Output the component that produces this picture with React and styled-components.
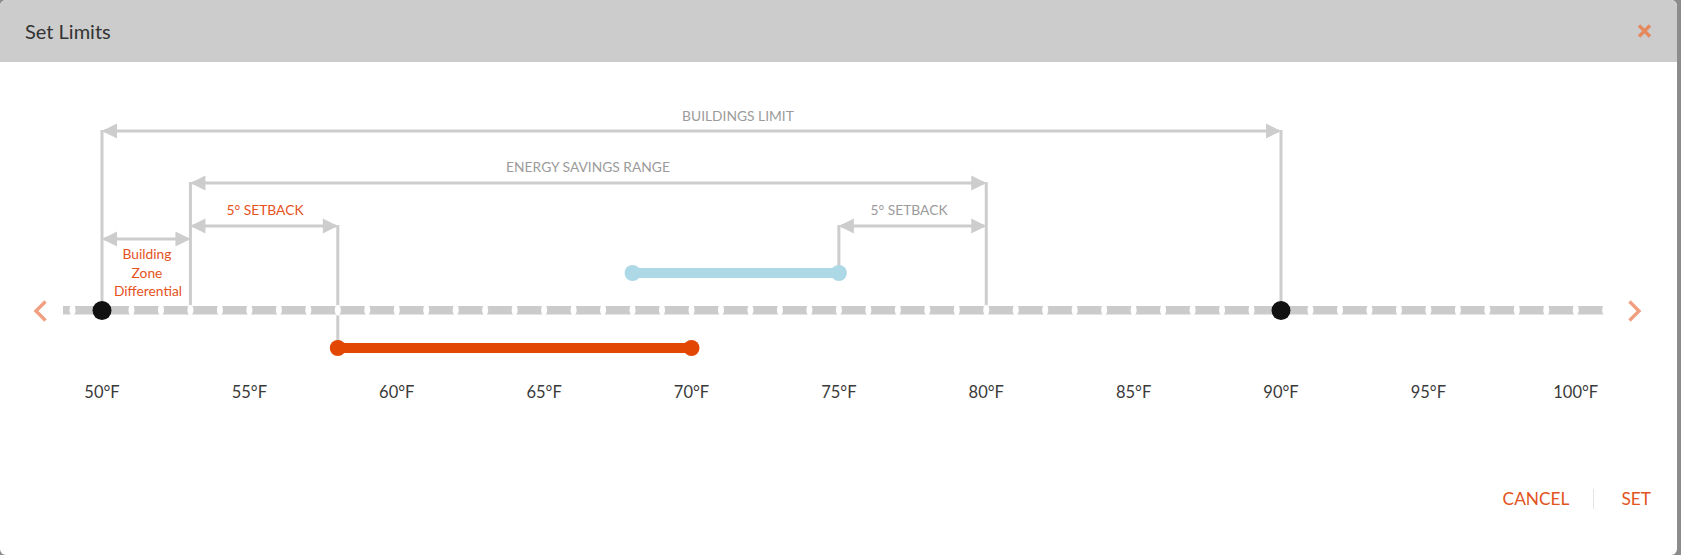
import React from "react";
import styled, { createGlobalStyle } from "styled-components";

const GlobalStyle = createGlobalStyle`
  html, body {
    margin: 0;
    padding: 0;
    background: #8c8c8c;
    font-family: Lato, "Open Sans", sans-serif;
  }
  * { box-sizing: border-box; }
`;

const Modal = styled.div`
  width: 1677px;
  height: 555px;
  background: #ffffff;
  border-radius: 6px;
  display: flex;
  flex-direction: column;
  overflow: hidden;
`;

const Header = styled.div`
  height: 62px;
  flex: 0 0 62px;
  background: #cccccc;
  display: flex;
  align-items: center;
  justify-content: space-between;
  padding: 0 25px 0 25px;
`;

const Title = styled.h2`
  margin: 0;
  font-family: Lato, sans-serif;
  font-weight: 400;
  font-size: 20px;
  color: #333333;
`;

const CloseButton = styled.button`
  border: 0;
  background: none;
  padding: 0;
  width: 15px;
  height: 14px;
  display: flex;
  cursor: pointer;
  color: #e5895f;
`;

const ChartRow = styled.div`
  height: 378px;
  flex: 0 0 378px;
  display: flex;
  align-items: flex-start;
`;

const NavButton = styled.button`
  border: 0;
  background: none;
  height: 22px;
  margin-top: 238px;
  flex: 0 0 ${(p) => p.$w}px;
  width: ${(p) => p.$w}px;
  padding: 0 0 0 ${(p) => p.$pad}px;
  display: flex;
  align-items: center;
  color: #f0a080;
  cursor: pointer;
`;

const Chart = styled.svg`
  flex: 0 0 1555px;
  display: block;
`;

const AxisLabel = styled.text`
  font-family: Lato, sans-serif;
  font-size: 16.5px;
  fill: #3a3a3a;
`;

const RangeLabel = styled.text`
  font-family: Lato, sans-serif;
  font-size: 13.8px;
  fill: ${(p) => (p.$accent ? "#e5521c" : "#9b9b9b")};
`;

const Footer = styled.div`
  display: flex;
  justify-content: flex-end;
  align-items: center;
  padding: 49px 26px 0 0;
`;

const FooterButton = styled.button`
  border: 0;
  background: none;
  padding: 0;
  line-height: 20px;
  font-family: Lato, sans-serif;
  font-size: 17.3px;
  color: #e2541c;
  cursor: pointer;
`;

const Separator = styled.span`
  width: 1px;
  height: 20px;
  background: #e4e4e4;
  margin: 0 27px 0 24px;
`;

const X0 = 102;
const PX = 29.475;
const xOf = (t) => X0 + (t - 50) * PX;
const LINE = "#cdcdcd";
const HEAD = 15;

function Dimension({ from, to, y }) {
  const a = xOf(from);
  const b = xOf(to);
  return (
    <g fill={LINE}>
      <rect x={a + 2} y={y - 1.5} width={b - a - 4} height={3} />
      <polygon points={`${a},${y} ${a + HEAD},${y - 7.5} ${a + HEAD},${y + 7.5}`} />
      <polygon points={`${b},${y} ${b - HEAD},${y - 7.5} ${b - HEAD},${y + 7.5}`} />
    </g>
  );
}

function Leader({ at, y1, y2 }) {
  const x = xOf(at);
  return <rect x={x - 1.5} y={y1} width={3} height={y2 - y1} fill={LINE} />;
}

function RangeBar({ from, to, y, color }) {
  const a = xOf(from);
  const b = xOf(to);
  return (
    <g fill={color}>
      <rect x={a} y={y - 5} width={b - a} height={10} />
      <circle cx={a} cy={y} r={8} />
      <circle cx={b} cy={y} r={8} />
    </g>
  );
}

const LINE_START = 63;
const LINE_END = 1607;
const gaps = [];
for (let k = -1; k <= 51; k++) gaps.push(xOf(50 + k));
const ticks = [50, 55, 60, 65, 70, 75, 80, 85, 90, 95, 100];

export default function App() {
  return (
    <>
      <GlobalStyle />
      <Modal>
        <Header>
          <Title>Set Limits</Title>
          <CloseButton aria-label="close">
            <svg width="15" height="14" viewBox="0 0 15 14">
              <path d="M2 1.5 L13 12.5 M13 1.5 L2 12.5" stroke="currentColor" strokeWidth="3.4" strokeLinecap="butt" />
            </svg>
          </CloseButton>
        </Header>
        <ChartRow>
          <NavButton $w={60} $pad={33} aria-label="previous">
            <svg width="15" height="22" viewBox="0 0 15 22">
              <path d="M12.5 1.5 L3 11 L12.5 20.5" fill="none" stroke="currentColor" strokeWidth="3.4" />
            </svg>
          </NavButton>
          <Chart width="1555" height="378" viewBox="60 62 1555 378">
            <RangeLabel x={738} y={115.5} textAnchor="middle" dominantBaseline="central">BUILDINGS LIMIT</RangeLabel>
            <RangeLabel x={588} y={166.5} textAnchor="middle" dominantBaseline="central">ENERGY SAVINGS RANGE</RangeLabel>
            <RangeLabel $accent x={265} y={209.5} textAnchor="middle" dominantBaseline="central">5° SETBACK</RangeLabel>
            <RangeLabel x={909} y={209.5} textAnchor="middle" dominantBaseline="central">5° SETBACK</RangeLabel>
            <RangeLabel $accent x={147} textAnchor="middle">
              <tspan x={147} y={258.5}>Building</tspan>
              <tspan x={147} y={277.5}>Zone</tspan>
              <tspan x={148} y={296}>Differential</tspan>
            </RangeLabel>

            <Leader at={50} y1={130} y2={310} />
            <Leader at={53} y1={182} y2={306} />
            <Leader at={58} y1={225} y2={347} />
            <Leader at={75} y1={225} y2={273} />
            <Leader at={80} y1={182} y2={306} />
            <Leader at={90} y1={130} y2={310} />

            <Dimension from={50} to={90} y={131} />
            <Dimension from={53} to={80} y={183} />
            <Dimension from={53} to={58} y={226} />
            <Dimension from={75} to={80} y={226} />
            <Dimension from={50} to={53} y={239} />

            <rect x={LINE_START} y={306} width={LINE_END - LINE_START} height={8.5} fill="#cbcbcb" />
            {gaps.map((g) => (
              <ellipse key={g} cx={g} cy={310.2} rx={3} ry={5.5} fill="#ffffff" />
            ))}

            <RangeBar from={68} to={75} y={273} color="#add8e6" />
            <RangeBar from={58} to={70} y={348} color="#e24703" />

            <circle cx={xOf(50)} cy={310.5} r={9.5} fill="#111111" />
            <circle cx={xOf(90)} cy={310.5} r={9.5} fill="#111111" />

            {ticks.map((t) => (
              <AxisLabel key={t} x={xOf(t)} y={392} textAnchor="middle" dominantBaseline="central">
                {t}°F
              </AxisLabel>
            ))}
          </Chart>
          <NavButton $w={62} $pad={12} aria-label="next">
            <svg width="15" height="22" viewBox="0 0 15 22">
              <path d="M2.5 1.5 L12 11 L2.5 20.5" fill="none" stroke="currentColor" strokeWidth="3.4" />
            </svg>
          </NavButton>
        </ChartRow>
        <Footer>
          <FooterButton>CANCEL</FooterButton>
          <Separator />
          <FooterButton>SET</FooterButton>
        </Footer>
      </Modal>
    </>
  );
}
